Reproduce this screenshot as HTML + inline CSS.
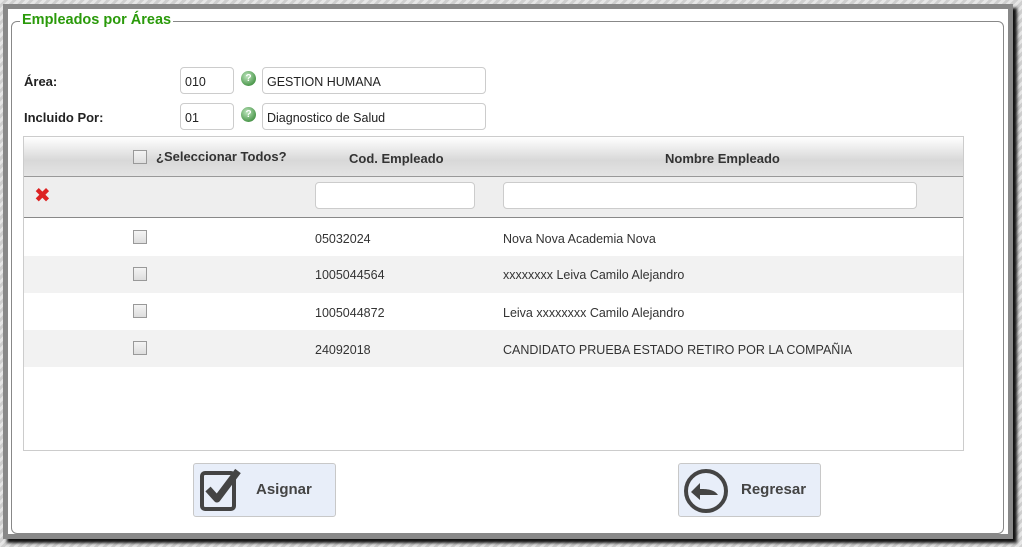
<!DOCTYPE html>
<html><head><meta charset="utf-8"><style>
*{box-sizing:border-box;margin:0;padding:0}
body{width:1022px;height:547px;overflow:hidden;background:repeating-linear-gradient(135deg,#e6e6e6 0 3px,#cfcfcf 3px 6px);font-family:"Liberation Sans","DejaVu Sans",sans-serif;position:relative}
.a{position:absolute}
.win{left:3px;top:4px;width:1010px;height:535px;background:#fff;border:5px solid #888;box-shadow:4px 4px 3px #111}
.fs{left:11px;top:21px;width:993px;height:513px;border:1px solid #888;border-radius:6px}
.leg{left:20px;top:12px;background:#fff;padding:0 2px;color:#2a9a0a;font-weight:bold;font-size:14.5px}
.lbl{font-weight:bold;font-size:13px;color:#222}
.in{border:1px solid #ccc;border-radius:4px;background:#fff;font-size:12.5px;color:#222;padding:0 0 0 4px;line-height:28px}
.q{width:15px;height:15px;border-radius:50%;background:radial-gradient(circle at 40% 35%,#bfe6bf,#4f9a4f 70%,#2f6f2f);color:#fff;font-size:10px;font-weight:bold;text-align:center;line-height:15px}
.tbl{left:23px;top:136px;width:941px;height:315px;border:1px solid #ccc}
.hd{left:0;top:0;width:939px;height:40px;background:linear-gradient(#fff,#d8d8d8 60%,#e4e4e4);border-bottom:1px solid #999}
.th{font-weight:bold;font-size:13px;color:#333}
.flt{left:0;top:40px;width:939px;height:41px;background:#eee;border-bottom:1px solid #888}
.row{left:0;width:939px;height:37px;font-size:12.5px;color:#333}
.cb{width:14px;height:14px;border:1px solid #999;background:linear-gradient(#f4f4f4,#ddd)}
.btn{width:143px;height:54px;background:#e8eef9;border:1px solid #c8c8c8;border-radius:3px;font-weight:bold;font-size:15px;color:#444}
</style></head><body>
<div class="a win"></div>
<div class="a fs"></div>
<div class="a leg">Empleados por Áreas</div>
<div class="a lbl" style="left:24px;top:74px">Área:</div>
<div class="a lbl" style="left:24px;top:110px">Incluido Por:</div>
<div class="a in" style="left:180px;top:67px;width:54px;height:27px">010</div>
<div class="a q" style="left:241px;top:71px">?</div>
<div class="a in" style="left:262px;top:67px;width:224px;height:27px">GESTION HUMANA</div>
<div class="a in" style="left:180px;top:103px;width:54px;height:27px">01</div>
<div class="a q" style="left:241px;top:107px">?</div>
<div class="a in" style="left:262px;top:103px;width:224px;height:27px">Diagnostico de Salud</div>
<div class="a tbl">
 <div class="a hd">
  <div class="a cb" style="left:109px;top:13px"></div>
  <div class="a th" style="left:132px;top:12px">¿Seleccionar Todos?</div>
  <div class="a th" style="left:325px;top:14px">Cod. Empleado</div>
  <div class="a th" style="left:641px;top:14px">Nombre Empleado</div>
 </div>
 <div class="a flt">
  <div class="a" style="left:10px;top:6px;color:#d22;font-size:20px;font-weight:bold">✖</div>
  <div class="a in" style="left:291px;top:5px;width:160px;height:27px"></div>
  <div class="a in" style="left:479px;top:5px;width:414px;height:27px"></div>
 </div>
 <div class="a row" style="top:82px;background:#fff"><div class="a cb" style="left:109px;top:11px"></div><div class="a" style="left:291px;top:13px">05032024</div><div class="a" style="left:479px;top:13px">Nova Nova Academia Nova</div></div>
 <div class="a row" style="top:119px;background:#f2f2f2"><div class="a cb" style="left:109px;top:11px"></div><div class="a" style="left:291px;top:12px">1005044564</div><div class="a" style="left:479px;top:12px">xxxxxxxx Leiva Camilo Alejandro</div></div>
 <div class="a row" style="top:156px;background:#fff"><div class="a cb" style="left:109px;top:11px"></div><div class="a" style="left:291px;top:13px">1005044872</div><div class="a" style="left:479px;top:13px">Leiva xxxxxxxx Camilo Alejandro</div></div>
 <div class="a row" style="top:193px;background:#f2f2f2"><div class="a cb" style="left:109px;top:11px"></div><div class="a" style="left:291px;top:13px">24092018</div><div class="a" style="left:479px;top:13px">CANDIDATO PRUEBA ESTADO RETIRO POR LA COMPAÑIA</div></div>
</div>
<div class="a btn" style="left:193px;top:463px">
 <svg class="a" style="left:4px;top:3px" width="46" height="48" viewBox="0 0 46 48"><rect x="4" y="6" width="32" height="36" rx="3" fill="none" stroke="#444" stroke-width="4"/><path d="M10 22 L19 32 L40 4" fill="none" stroke="#444" stroke-width="7" stroke-linejoin="round"/></svg>
 <div class="a" style="left:62px;top:17px">Asignar</div>
</div>
<div class="a btn" style="left:678px;top:463px">
 <svg class="a" style="left:3px;top:3px" width="48" height="48" viewBox="0 0 48 48"><circle cx="24" cy="24" r="20" fill="none" stroke="#444" stroke-width="4"/><path d="M36 28 C32 22 24 22 18 22 L18 16 L9 25 L18 33 L18 28 C24 28 30 28 36 28Z" fill="#444"/></svg>
 <div class="a" style="left:62px;top:17px">Regresar</div>
</div>
</body></html>
